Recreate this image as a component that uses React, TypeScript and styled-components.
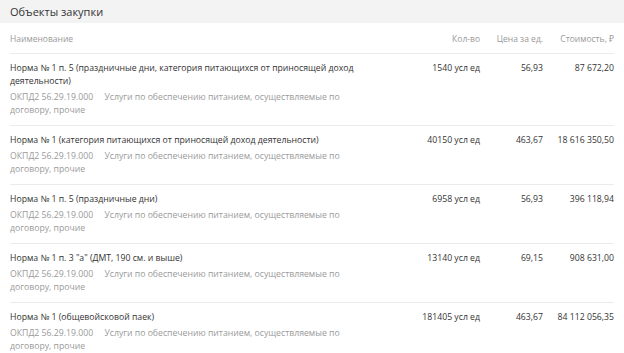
import styled, { createGlobalStyle } from "styled-components";

interface Item {
  name: string;
  qty: string;
  price: string;
  cost: string;
}

const items: Item[] = [
  {
    name: "Норма № 1 п. 5 (праздничные дни, категория питающихся от приносящей доход деятельности)",
    qty: "1540 усл ед",
    price: "56,93",
    cost: "87 672,20",
  },
  {
    name: "Норма № 1 (категория питающихся от приносящей доход деятельности)",
    qty: "40150 усл ед",
    price: "463,67",
    cost: "18 616 350,50",
  },
  {
    name: "Норма № 1 п. 5 (праздничные дни)",
    qty: "6958 усл ед",
    price: "56,93",
    cost: "396 118,94",
  },
  {
    name: "Норма № 1 п. 3 \"а\" (ДМТ, 190 см. и выше)",
    qty: "13140 усл ед",
    price: "69,15",
    cost: "908 631,00",
  },
  {
    name: "Норма № 1 (общевойсковой паек)",
    qty: "181405 усл ед",
    price: "463,67",
    cost: "84 112 056,35",
  },
];

const okpd =
  "ОКПД2 56.29.19.000\u00a0\u00a0\u00a0\u00a0 Услуги по обеспечению питанием, осуществляемые по договору, прочие";

const GlobalStyle = createGlobalStyle`
  body {
    margin: 0;
    background: #ffffff;
    font-family: "Open Sans", "Noto Sans", sans-serif;
    color: #333333;
  }
`;

const Page = styled.div`
  width: 624px;
  height: 353px;
  overflow: hidden;
`;

const TitleBar = styled.div`
  height: 23px;
  background: #f3f3f3;
  display: flex;
  align-items: center;
  padding-left: 10px;
  font-size: 11px;
  color: #333;
`;

const Grid = styled.div`
  display: grid;
  grid-template-columns: 355px 115px 63px 71px;
  padding: 0 10px;
`;

const Head = styled.div<{ $right?: boolean }>`
  height: 30px;
  display: flex;
  align-items: center;
  justify-content: ${(p) => (p.$right ? "flex-end" : "flex-start")};
  font-size: 8.5px;
  color: #999;
  border-bottom: 1px solid #ebebeb;
`;

const Cell = styled.div<{ $right?: boolean }>`
  padding: 8px 0;
  font-size: 8.7px;
  line-height: 13px;
  text-align: ${(p) => (p.$right ? "right" : "left")};
  border-bottom: 1px solid #ebebeb;
`;

const Name = styled.div`
  color: #333;
  margin-bottom: 3px;
`;

const Okpd = styled.div`
  color: #9a9a9a;
`;

export default function App() {
  return (
    <Page>
      <GlobalStyle />
      <TitleBar>Объекты закупки</TitleBar>
      <Grid>
        <Head>Наименование</Head>
        <Head $right>Кол-во</Head>
        <Head $right>Цена за ед.</Head>
        <Head $right>Стоимость, ₽</Head>
        {items.map((it, i) => [
          <Cell key={`n${i}`}>
            <Name>{it.name}</Name>
            <Okpd>{okpd}</Okpd>
          </Cell>,
          <Cell key={`q${i}`} $right>{it.qty}</Cell>,
          <Cell key={`p${i}`} $right>{it.price}</Cell>,
          <Cell key={`c${i}`} $right>{it.cost}</Cell>,
        ])}
      </Grid>
    </Page>
  );
}
